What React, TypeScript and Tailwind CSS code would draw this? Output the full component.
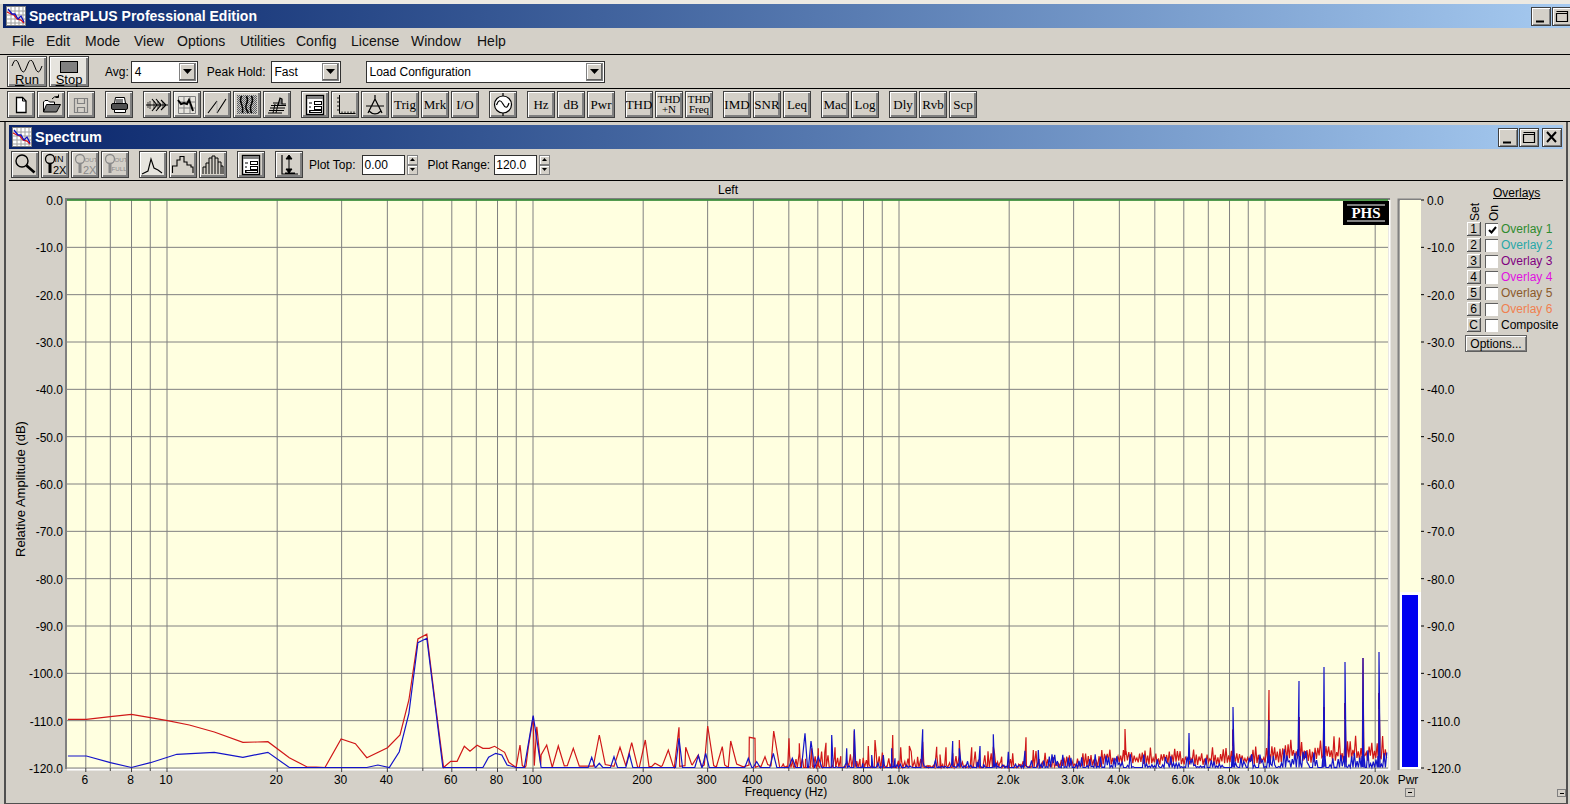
import type { ReactNode } from "react";

const bevel =
  "border border-[#404040] shadow-[inset_1px_1px_0_#ffffff,inset_-1px_-1px_0_#808080,inset_-2px_-2px_0_#808080]";
const sans = "font-['Liberation_Sans',Arial,sans-serif]";
const serif = "font-['Liberation_Serif','Times_New_Roman',serif]";

function ToolBtn({
  children,
  on,
  className = ""
}: {
  children: ReactNode;
  on?: boolean;
  className?: string;
}): JSX.Element {
  return (
    <div
      className={`flex h-[27px] w-[28px] shrink-0 items-center justify-center overflow-hidden leading-none text-black ${bevel} ${on ? "bg-[#e6e4de]" : "bg-[#d4d0c8]"} ${className}`}
    >
      {children}
    </div>
  );
}

function Ico({ children }: { children: ReactNode }): JSX.Element {
  return (
    <svg width="26" height="25" viewBox="1 1 26 25" fill="none" stroke="black" strokeWidth="1">
      {children}
    </svg>
  );
}

function TextBtn({ label, className = "" }: { label: string; className?: string }): JSX.Element {
  return (
    <ToolBtn className={`${serif} text-[13px] ${className}`}>
      <span>{label}</span>
    </ToolBtn>
  );
}

function AppIcon(): JSX.Element {
  return (
    <svg width="20" height="20" viewBox="0 0 20 20">
      <rect x="0.5" y="0.5" width="19" height="19" fill="white" stroke="#808080" />
      <path d="M1 5h18M1 9h18M1 13h18M1 17h18M5 1v18M9 1v18M13 1v18M17 1v18" stroke="#a0a0a0" strokeWidth="1" />
      <path d="M1 6l4 2 3 1 3 4 4 1 3 3" stroke="#e01010" strokeWidth="1.3" fill="none" />
      <path d="M2 3l4 5 3 0 3 5 3-3 3 6" stroke="#1010c0" strokeWidth="1.3" fill="none" />
    </svg>
  );
}

function CapBtn({ kind }: { kind: "min" | "max" | "close" }): JSX.Element {
  return (
    <div className="relative h-[19px] w-[20px] shrink-0 border border-[#404040] bg-[#d4d0c8] shadow-[inset_1px_1px_0_#ffffff,inset_-1px_-1px_0_#808080]">
      <svg width="18" height="17" viewBox="0 0 18 17" fill="none" stroke="black">
        {kind === "min" ? <path d="M4 13.5h8" strokeWidth="2" /> : null}
        {kind === "max" ? <path d="M3.5 5.5h11v8h-11zM3.5 3.5h11v2" strokeWidth="1.2" /> : null}
        {kind === "close" ? <path d="M4 3l9 10M13 3l-9 10" strokeWidth="2" /> : null}
      </svg>
    </div>
  );
}

function Combo({ value, className }: { value: string; className: string }): JSX.Element {
  return (
    <div className={`flex h-[22px] items-center justify-between border border-[#303030] bg-white pl-[3px] text-[12px] text-black ${className}`}>
      <span>{value}</span>
      <div className="mr-[1px] flex h-[18px] w-[17px] items-center justify-center border border-[#808080] bg-[#d4d0c8] shadow-[inset_-1px_-1px_0_#606060,inset_1px_1px_0_#ffffff]">
        <svg width="9" height="5" viewBox="0 0 9 5">
          <path d="M0 0h9L4.5 5z" fill="black" />
        </svg>
      </div>
    </div>
  );
}

function Spinner(): JSX.Element {
  return (
    <div className="flex h-[20px] w-[11px] flex-col">
      {[0, 1].map((i) => (
        <div key={i} className="flex h-[10px] items-center justify-center border border-[#808080] bg-[#d4d0c8] shadow-[inset_1px_1px_0_#ffffff]">
          <svg width="5" height="3" viewBox="0 0 5 3">
            <path d={i === 0 ? "M0 3h5L2.5 0z" : "M0 0h5L2.5 3z"} fill="black" />
          </svg>
        </div>
      ))}
    </div>
  );
}

function OptionsPanelIcon(): JSX.Element {
  return (
    <Ico>
      <rect x="5.5" y="4.5" width="17" height="19" fill="white" strokeWidth="1.4" />
      <rect x="6" y="5" width="16" height="3" fill="#808080" stroke="none" />
      <rect x="13.5" y="10.5" width="7" height="3" />
      <rect x="13.5" y="15.5" width="7" height="3" />
      <rect x="8.5" y="19.5" width="12" height="2" />
      <path d="M8 12h3M8 16h2M8 21h2" />
    </Ico>
  );
}

function ZoomIcon({ top, bottom, off }: { top: string; bottom: string; off?: boolean }): JSX.Element {
  const ink = off ? "#8a8a8a" : "black";
  const full = bottom.length > 2;
  return (
    <Ico>
      <circle cx="9" cy="8" r="4.5" stroke={ink} strokeWidth="1.3" />
      <path d="M9 12.5v9.5" stroke={ink} strokeWidth="3" />
      <text x="13.5" y="11" fontSize={top === "IN" ? 9 : 6.2} fill={ink} stroke="none" fontFamily="Liberation Sans">
        {top}
      </text>
      <text x={full ? 10.5 : 12} y={full ? 20 : 23} fontSize={full ? 6.2 : 11} fill={ink} stroke="none" fontFamily="Liberation Sans">
        {bottom}
      </text>
    </Ico>
  );
}

// plot geometry, in page pixels
const plotL = 67;
const plotR = 1388;
const plotT = 200;
const plotB = 768;
const fx = (f: number): number => 167 + 366 * (Math.log10(f) - 1);
const dby = (db: number): number => plotT + (db / 120) * (plotB - plotT);

const gridFreqs = [
  6, 7, 8, 9, 10, 20, 30, 40, 50, 60, 70, 80, 90, 100, 200, 300, 400, 500, 600, 700, 800, 900, 1000, 2000, 3000,
  4000, 5000, 6000, 7000, 8000, 9000, 10000, 20000
];
const freqLabels: [number, string][] = [
  [6, "6"], [8, "8"], [10, "10"], [20, "20"], [30, "30"], [40, "40"], [60, "60"], [80, "80"], [100, "100"],
  [200, "200"], [300, "300"], [400, "400"], [600, "600"], [800, "800"], [1000, "1.0k"], [2000, "2.0k"],
  [3000, "3.0k"], [4000, "4.0k"], [6000, "6.0k"], [8000, "8.0k"], [10000, "10.0k"], [20000, "20.0k"]
];
const tickFreqs = [7, 9, 50, 70, 90, 500, 700, 900, 5000, 7000, 9000];

const redLow = [
  [190, 298], [242, 298], [309, 290], [368, 283], [421, 293], [469, 302], [530, 315], [600, 336], [680, 367],
  [720, 366], [750, 365], [810, 413], [860, 441], [885, 441], [910, 447], [955, 357], [995, 371], [1027, 413],
  [1085, 383], [1120, 345], [1145, 240], [1170, 57], [1195, 43], [1220, 260], [1242, 445], [1262, 424],
  [1280, 424], [1300, 379], [1316, 394], [1336, 376], [1352, 385], [1370, 385], [1385, 379], [1413, 397],
  [1425, 427], [1445, 447], [1470, 447], [1493, 290], [1503, 320], [1515, 405]
].map(([x, y]) => [x / 2.8, 620 + y / 3]);

const blueLow = [
  [190, 408], [242, 408], [309, 428], [368, 445], [421, 428], [495, 403], [600, 397], [680, 412], [750, 397],
  [810, 446], [1027, 446], [1058, 435], [1090, 446], [1118, 395], [1145, 280], [1170, 68], [1195, 55], [1240, 446],
  [1352, 446], [1368, 412], [1388, 400], [1405, 405], [1420, 435], [1445, 446], [1468, 446], [1493, 287], [1515, 446]
].map(([x, y]) => [x / 2.8, 620 + y / 3]);

const redPeaks = [
  [-60, 255], [-35, 262], [20, 255], [55, 258], [100, 265], [178, 225], [240, 262], [275, 248], [316, 240], [345, 310],
  [385, 270], [417, 202], [437, 262], [475, 285], [503, 198], [547, 260], [572, 243], [628, 232], [645, 235],
  [675, 290], [701, 213], [747, 235], [778, 250], [815, 265], [835, 265], [858, 248], [885, 262], [943, 212],
  [985, 258], [1005, 240], [1058, 225], [1082, 262], [1108, 258], [1148, 245], [1190, 260], [1218, 262],
  [1258, 240], [1295, 262], [1360, 260], [1385, 290], [1418, 280], [1458, 232], [1480, 270]
];
const bluePeaks = [
  [155, 292], [178, 310], [222, 290], [268, 282], [417, 235], [475, 287], [497, 280], [625, 295], [650, 305],
  [700, 280], [757, 295], [795, 220], [813, 243], [835, 290], [875, 225], [920, 265], [943, 208], [968, 310],
  [995, 285], [1030, 285], [1055, 265], [1065, 295], [1148, 208], [1185, 305], [1238, 243], [1258, 265],
  [1320, 258], [1360, 223], [1405, 275], [1455, 272], [1495, 270]
];

const spikes = [
  { x: 1233, blue: 707, red: 729, mid: 730 },
  { x: 1269, blue: 720, red: 690, mid: 720 },
  { x: 1299, blue: 681, red: 717, mid: 717 },
  { x: 1324, blue: 667, red: 707, mid: 707 },
  { x: 1345, blue: 662, red: 703, mid: 703 },
  { x: 1363, blue: 658, red: 658, mid: 702 },
  { x: 1379, blue: 652, red: 693, mid: 693 }
];

function makeRand(seed: number): () => number {
  let s = seed;
  return () => {
    s = (s + 0x6d2b79f5) | 0;
    let t = Math.imul(s ^ (s >>> 15), 1 | s);
    t = (t + Math.imul(t ^ (t >>> 7), 61 | t)) ^ t;
    return ((t ^ (t >>> 14)) >>> 0) / 4294967296;
  };
}

function tracePath(low: number[][], peaks: number[][], seed: number, kind: "red" | "blue"): string {
  const rand = makeRand(seed);
  const isRed = kind === "red";
  const pts: number[][] = [...low];
  const half = isRed ? 6 : 3.5;
  for (const [z, y] of peaks) {
    const px = 540 + z / 3;
    const py = 660 + y / 3;
    pts.push([px - half, plotB - (isRed ? rand() * 4 : 0)], [px, py], [px + half, plotB - (isRed ? rand() * 4 : 0)]);
  }
  // floor noise above ~600 Hz, grows with frequency
  let x = isRed ? 780 : 830;
  while (x < plotR) {
    const far = x > 1040;
    const high = x > 1270;
    let h: number;
    let dip: number;
    if (isRed) {
      const floor = high ? 15 : x > 1100 ? 9 : far ? 3 : 0;
      const band = high ? 18 : far ? 13 : 17;
      h = floor + Math.pow(rand(), 1.1) * band;
      dip = floor * (0.35 + rand() * 0.5);
    } else {
      const band = high ? 19 : far ? 14 : 9;
      h = Math.pow(rand(), 2) * band;
      dip = rand() > 0.4 ? 0 : h * rand() * 0.6;
    }
    pts.push([x, plotB - h], [x + 1.3, plotB - dip]);
    x += far ? 2.7 : 3.2;
  }
  for (const s of spikes) {
    const top = isRed ? s.red : s.blue;
    pts.push([s.x - 1, plotB - 12], [s.x, top], [s.x + 1, plotB - 12]);
  }
  if (isRed) pts.push([1125, 729], [1124, 755], [1126, 755]);
  else pts.push([1189, 733], [1188, 760], [1190, 760]);
  pts.sort((a, b) => a[0] - b[0]);
  return "M" + pts.filter((p) => p[0] >= plotL && p[0] <= plotR).map((p) => `${p[0].toFixed(1)} ${Math.min(p[1], plotB - 0.5).toFixed(1)}`).join("L");
}

const redPath = tracePath(redLow, redPeaks, 11, "red");
const bluePath = tracePath(blueLow, bluePeaks, 29, "blue");

function SpectrumChart(): JSX.Element {
  const dbs = Array.from({ length: 13 }, (_, i) => i * -10);
  return (
    <svg width="1451" height="622" viewBox="9 181 1451 622" className="block shrink-0 overflow-visible" fontFamily="Liberation Sans, Arial, sans-serif" fontSize="12">
      <text x="728" y="194" textAnchor="middle" fill="black">Left</text>
      <text x="0" y="0" textAnchor="middle" fontSize="13" fill="black" transform="translate(25 489) rotate(-90)">Relative Amplitude (dB)</text>
      <rect x={plotL} y={plotT} width={plotR - plotL} height={plotB - plotT} fill="#ffffe0" />
      <path d={`M${plotL - 1} ${plotB + 1}V${plotT - 1}H${plotR + 2}`} stroke="#808080" strokeWidth="2" fill="none" />
      <path d={`M${plotR + 1.5} ${plotT}V${plotB + 1.5}H${plotL}`} stroke="white" strokeWidth="2" fill="none" />
      {gridFreqs.map((f) => (
        <line key={f} x1={fx(f)} x2={fx(f)} y1={plotT} y2={plotB} stroke="#808080" />
      ))}
      {dbs.map((d) => (
        <g key={d}>
          <line x1={plotL} x2={plotR} y1={dby(-d)} y2={dby(-d)} stroke="#808080" />
          <text x="63" y={dby(-d) + 5} textAnchor="end" fill="black">{d === 0 ? "0.0" : `${d}.0`}</text>
          <line x1="1421" x2="1424" y1={dby(-d)} y2={dby(-d)} stroke="black" />
          <text x="1427" y={dby(-d) + 5} fill="black">{d === 0 ? "0.0" : `${d}.0`}</text>
        </g>
      ))}
      <line x1={plotL} x2={plotR} y1={plotT} y2={plotT} stroke="#2f8f2f" strokeWidth="1.5" />
      {freqLabels.map(([f, label]) => (
        <g key={f}>
          <line x1={fx(f)} x2={fx(f)} y1={plotB} y2={plotB + 4} stroke="#404040" />
          <text x={fx(f) - 1} y="784" textAnchor="middle" fill="black">{label}</text>
        </g>
      ))}
      {tickFreqs.map((f) => (
        <line key={f} x1={fx(f)} x2={fx(f)} y1={plotB} y2={plotB + 3} stroke="#404040" />
      ))}
      <text x="786" y="796" textAnchor="middle" fill="black">Frequency (Hz)</text>

      <path d={redPath} fill="none" stroke="#d01818" strokeWidth="1.2" />
      {spikes.map((s) => (
        <line key={s.x} x1={s.x} x2={s.x} y1={s.mid} y2={s.mid + 16} stroke="#b01040" strokeWidth="2" />
      ))}
      <path d={bluePath} fill="none" stroke="#1414c8" strokeWidth="1.2" />

      <rect x="1343" y="201" width="46" height="24" fill="black" />
      <path d="M1347 205h38M1347 221h38" stroke="white" />
      <text x="1366" y="218" textAnchor="middle" fill="white" fontFamily="Liberation Serif, serif" fontWeight="700" fontSize="15">PHS</text>

      <path d="M1398.5 770V199.5H1421" stroke="#808080" strokeWidth="2" fill="none" />
      <rect x="1400" y="200" width="21" height="568" fill="#ffffe0" />
      <rect x="1400" y="592" width="21" height="177" fill="white" />
      <rect x="1402" y="595" width="16" height="172" fill="#0000f0" />
      <text x="1408" y="784" textAnchor="middle" fill="black">Pwr</text>
      <rect x="1405.5" y="788.5" width="9" height="8" fill="#d4d0c8" stroke="#808080" />
      <path d="M1408 792.5h4" stroke="black" />
    </svg>
  );
}

const overlays = [
  ["1", "Overlay 1", "text-[#2e8b2e]"],
  ["2", "Overlay 2", "text-[#28a8a8]"],
  ["3", "Overlay 3", "text-[#800080]"],
  ["4", "Overlay 4", "text-[#e010e0]"],
  ["5", "Overlay 5", "text-[#8b5a2b]"],
  ["6", "Overlay 6", "text-[#f08050]"],
  ["C", "Composite", "text-black"]
];

const menus = [
  ["File", "w-[34px]"],
  ["Edit", "w-[39px]"],
  ["Mode", "w-[49px]"],
  ["View", "w-[43px]"],
  ["Options", "w-[63px]"],
  ["Utilities", "w-[56px]"],
  ["Config", "w-[55px]"],
  ["License", "w-[60px]"],
  ["Window", "w-[66px]"],
  ["Help", "w-[30px]"]
];

function OverlayPanel(): JSX.Element {
  return (
    <div className={`flex h-[622px] w-[103px] shrink-0 flex-col pl-[7px] text-[12px] text-black ${sans}`}>
      <div className="mt-[5px] ml-[26px] leading-[14px] underline">Overlays</div>
      <div className="flex h-[21px] gap-[7px] pl-[2px] leading-none">
        <span className="rotate-180 [writing-mode:vertical-rl]">Set</span>
        <span className="mt-[2px] rotate-180 [writing-mode:vertical-rl]">On</span>
      </div>
      {overlays.map(([key, label, color], i) => (
        <div key={key} className="flex h-[16px] items-center">
          <div className="flex h-[14px] w-[14px] items-center justify-center border-r border-b border-[#505050] bg-[#d4d0c8] leading-none shadow-[inset_1px_1px_0_#ffffff,inset_-1px_-1px_0_#a0a0a0]">
            {key}
          </div>
          <div className="ml-[4px] flex h-[13px] w-[13px] items-center justify-center border-t border-l border-[#606060] bg-white">
            {i === 0 ? (
              <svg width="9" height="8" viewBox="0 0 9 8" fill="none" stroke="black" strokeWidth="2">
                <path d="M1 4l2.5 2.5L8 1" />
              </svg>
            ) : null}
          </div>
          <span className={`ml-[3px] ${color}`}>{label}</span>
        </div>
      ))}
      <div className="mt-[2px] -ml-[2px] flex h-[17px] w-[62px] items-center justify-center border border-[#606060] bg-[#d4d0c8] shadow-[inset_1px_1px_0_#ffffff,inset_-1px_-1px_0_#808080]">
        Options...
      </div>
      <div className="mt-auto mb-[6px] ml-[90px] flex h-[8px] w-[9px] items-center justify-center border border-[#808080]">
        <div className="h-px w-[4px] bg-black" />
      </div>
    </div>
  );
}

export default function App(): JSX.Element {
  return (
    <div className={`flex h-[804px] w-[1570px] flex-col overflow-hidden border-t-[4px] border-[#ece9e2] bg-[#d4d0c8] ${sans}`}>
      {/* main title bar */}
      <div className="ml-[3px] -mr-[2px] flex h-[24px] shrink-0 items-center bg-gradient-to-r from-[#0a246a] to-[#a6caf0] pl-[3px]">
        <AppIcon />
        <span className="mt-[1px] ml-[3px] text-[14px] font-bold text-white">SpectraPLUS Professional Edition</span>
        <div className="ml-auto flex items-center gap-px">
          <CapBtn kind="min" />
          <CapBtn kind="max" />
        </div>
      </div>

      {/* menu */}
      <div className="flex h-[27px] shrink-0 items-center border-b border-black pl-[12px] text-[14px] text-[#111]">
        {menus.map(([label, width]) => (
          <span key={label} className={width}>
            {label}
          </span>
        ))}
      </div>

      {/* transport row */}
      <div className="flex h-[34px] shrink-0 items-center border-b border-black pl-[7px] text-[12px] text-black">
        <div className={`flex h-[31px] w-[40px] flex-col items-center bg-[#d4d0c8] ${bevel}`}>
          <svg width="32" height="13" viewBox="0 0 32 13" fill="none" stroke="black" className="mt-[3px] shrink-0">
            <path d="M1 6Q4.75-6 8.5 6T16 6T23.5 6T31 6" />
          </svg>
          <span className="text-[13px] leading-[13px]">
            <span className="underline">R</span>un
          </span>
        </div>
        <div className={`ml-[2px] flex h-[31px] w-[40px] flex-col items-center bg-[#e6e4de] ${bevel}`}>
          <div className="mt-[4px] h-[12px] w-[18px] shrink-0 border border-black bg-[#808080]" />
          <span className="text-[13px] leading-[13px]">
            <span className="underline">S</span>top
          </span>
        </div>
        <span className="ml-[16px]">Avg:</span>
        <Combo value="4" className="ml-[2px] w-[67px]" />
        <span className="ml-[9px]">Peak Hold:</span>
        <Combo value="Fast" className="ml-[5px] w-[70px]" />
        <Combo value="Load Configuration" className="ml-[25px] w-[239px]" />
      </div>

      {/* tool row */}
      <div className="flex h-[33px] shrink-0 items-center gap-[2px] border-b border-black pb-[2px] pl-[7px]">
        <ToolBtn>
          <Ico>
            <path d="M9.5 6.5h6l3.5 3.5v11.5h-9.5z" fill="white" strokeWidth="1.3" />
            <path d="M15.5 6.5v3.5h3.5" />
          </Ico>
        </ToolBtn>
        <ToolBtn>
          <Ico>
            <path d="M6.5 21V11l1.5-1.5h3l1.5 1.5h5v2" fill="white" />
            <path d="M6.5 21l3-7.5h14l-4 7.5z" fill="#707070" />
            <path d="M15 8q2-3 6-2.5M21.5 3.5v3h-3" />
          </Ico>
        </ToolBtn>
        <ToolBtn>
          <Ico>
            <path d="M7.5 7.5h13v14h-13zM10.5 7.5v5h7v-5M10.5 21.5v-5h7v5" stroke="#808080" strokeWidth="1.2" />
          </Ico>
        </ToolBtn>
        <ToolBtn className="ml-2">
          <Ico>
            <path d="M10.5 6.5h9l1 6h-11z" fill="white" />
            <rect x="6.5" y="12.5" width="16" height="6" rx="1.5" fill="#505050" />
            <path d="M9.5 18.5h11v3h-11z" fill="white" />
            <path d="M11 9h7M11 11h7" />
          </Ico>
        </ToolBtn>
        <ToolBtn className="ml-2">
          <Ico>
            <path d="M3 14h22M9 8l5 6-5 6M13 8l5 6-5 6M18 9l5 5-5 5" strokeWidth="1.1" />
            <path d="M5 11v6M7 10v8M11 10v8M15 10v8M17 12v4M20 11v6" strokeWidth="0.7" />
          </Ico>
        </ToolBtn>
        <ToolBtn on>
          <Ico>
            <path d="M5.5 5.5h17v17h-17zM5.5 11h17M5.5 17h17M11 5.5v17M17 5.5v17" stroke="#808080" />
            <path d="M5 9l3 4 3-1 3 1 2-4 2 5 2 6" strokeWidth="2" />
          </Ico>
        </ToolBtn>
        <ToolBtn>
          <Ico>
            <path d="M5 22L14 10M14 22L23 8" strokeWidth="1.1" />
            <path d="M14 10v12" stroke="#a0a0a0" strokeWidth="0.7" />
          </Ico>
        </ToolBtn>
        <ToolBtn>
          <Ico>
            <pattern id="dith" width="2" height="2" patternUnits="userSpaceOnUse">
              <rect width="2" height="2" fill="#c8c8c8" stroke="none" />
              <rect width="1" height="1" fill="#606060" stroke="none" />
              <rect x="1" y="1" width="1" height="1" fill="#606060" stroke="none" />
            </pattern>
            <rect x="4" y="4" width="20" height="19" fill="url(#dith)" stroke="none" />
            <path d="M8.5 5q-2 4 0 8t1 9M13.5 5q2 4 0 8t2 9M18.5 5q2 4 0 8t0 9" strokeWidth="1.5" />
          </Ico>
        </ToolBtn>
        <ToolBtn>
          <Ico>
            <path d="M5 22h14M6 19.5h15M7 17h15M8 14.5h15M10 12h6" strokeWidth="1.2" />
            <path d="M15 14l2-7 2 1 0 5h4" strokeWidth="1.2" fill="#808080" />
            <path d="M10 22l2-9M13 22l2-9" strokeWidth="1" />
          </Ico>
        </ToolBtn>
        <ToolBtn className="ml-2">
          <OptionsPanelIcon />
        </ToolBtn>
        <ToolBtn>
          <Ico>
            <path d="M8.5 4v18.5h16" />
            <path d="M6 7h2.5M6 11h2.5M6 15h2.5M6 19h2.5M11 20.5v2M14 20.5v2M17 20.5v2M20 20.5v2M23 20.5v2" strokeWidth="0.9" />
          </Ico>
        </ToolBtn>
        <ToolBtn>
          <Ico>
            <path d="M14 4v5M14 8L7 22M14 8l7 14M5 15h18" strokeWidth="1.2" />
            <path d="M8 20q6 6 12 0" strokeWidth="1.2" />
          </Ico>
        </ToolBtn>
        <TextBtn label="Trig" />
        <TextBtn label="Mrk" />
        <TextBtn label="I/O" />
        <ToolBtn className="ml-2">
          <Ico>
            <circle cx="14" cy="13.5" r="8.5" fill="white" strokeWidth="1.2" />
            <path d="M14 2v3M14 22v3M7.5 14q3-8 6.5-1t6-1" strokeWidth="1.2" />
          </Ico>
        </ToolBtn>
        <TextBtn label="Hz" className="ml-2" />
        <TextBtn label="dB" />
        <TextBtn label="Pwr" />
        <TextBtn label="THD" className="ml-2 text-[12px]" />
        <ToolBtn className={`${serif} text-[11px]`}>
          <span className="flex flex-col items-center leading-[10px]">
            <span>THD</span>
            <span>+N</span>
          </span>
        </ToolBtn>
        <ToolBtn className={`${serif} text-[11px]`}>
          <span className="flex flex-col items-center leading-[10px]">
            <span>THD</span>
            <span>Freq</span>
          </span>
        </ToolBtn>
        <TextBtn label="IMD" className="ml-2 text-[12px]" />
        <TextBtn label="SNR" className="text-[12px]" />
        <TextBtn label="Leq" />
        <TextBtn label="Mac" className="ml-2 text-[12px]" />
        <TextBtn label="Log" />
        <TextBtn label="Dly" className="ml-2" />
        <TextBtn label="Rvb" className="text-[12px]" />
        <TextBtn label="Scp" />
      </div>

      {/* spectrum child window */}
      <div className="mr-[2px] mb-[1px] ml-[4px] flex flex-1 flex-col border-x-2 border-b-2 border-[#505050] px-[3px] pt-[3px]">
        <div className="flex h-[24px] shrink-0 items-center bg-gradient-to-r from-[#0a246a] to-[#a6caf0] pl-[3px]">
          <AppIcon />
          <span className="mt-[1px] ml-[3px] text-[14.5px] font-bold text-white">Spectrum</span>
          <div className="mr-[1px] ml-auto flex items-center">
            <CapBtn kind="min" />
            <div className="ml-px">
              <CapBtn kind="max" />
            </div>
            <div className="ml-[3px]">
              <CapBtn kind="close" />
            </div>
          </div>
        </div>

        <div className="flex h-[32px] shrink-0 items-center gap-[2px] border-b border-black pl-[2px] text-[12px] text-black">
          <ToolBtn>
            <Ico>
              <circle cx="11" cy="10" r="6" stroke="black" strokeWidth="1.4" />
              <path d="M15.5 14.5l8 7" strokeWidth="2.6" />
            </Ico>
          </ToolBtn>
          <ToolBtn>
            <ZoomIcon top="IN" bottom="2X" />
          </ToolBtn>
          <ToolBtn>
            <ZoomIcon top="OUT" bottom="2X" off />
          </ToolBtn>
          <ToolBtn>
            <ZoomIcon top="OUT" bottom="FULL" off />
          </ToolBtn>
          <ToolBtn on className="ml-2">
            <Ico>
              <path d="M3 23l6-3 3-12 3 9 4 2 4 3" strokeWidth="1.1" />
            </Ico>
          </ToolBtn>
          <ToolBtn>
            <Ico>
              <path d="M3.5 22V15H8V9h3V5.5h4V11h3v3h4v2h2v6" strokeWidth="1.1" />
            </Ico>
          </ToolBtn>
          <ToolBtn>
            <Ico>
              <path d="M4 23V16h3v7M7 16v-4h3v11M10 12V7h3v16M13 7V5h3v18M16 7h3v16M19 11h3v12M22 15h2v8" strokeWidth="1" />
            </Ico>
          </ToolBtn>
          <ToolBtn className="ml-2">
            <OptionsPanelIcon />
          </ToolBtn>
          <ToolBtn className="ml-2">
            <Ico>
              <path d="M14 5v17M11 8l3-4 3 4zM11 18l3 4 3-4z" fill="black" />
              <path d="M7 4v19h16M10 22h10" strokeWidth="1.2" />
            </Ico>
          </ToolBtn>
          <span className="ml-[4px]">Plot Top:</span>
          <div className="ml-[5px] flex h-[20px] w-[43px] items-center border border-[#303030] bg-white pl-[1px]">0.00</div>
          <Spinner />
          <span className="ml-[7px]">Plot Range:</span>
          <div className="ml-[2px] flex h-[20px] w-[43px] items-center border border-[#303030] bg-white pl-[1px]">120.0</div>
          <Spinner />
        </div>

        <div className="flex flex-1">
          <SpectrumChart />
          <OverlayPanel />
        </div>
      </div>
    </div>
  );
}
